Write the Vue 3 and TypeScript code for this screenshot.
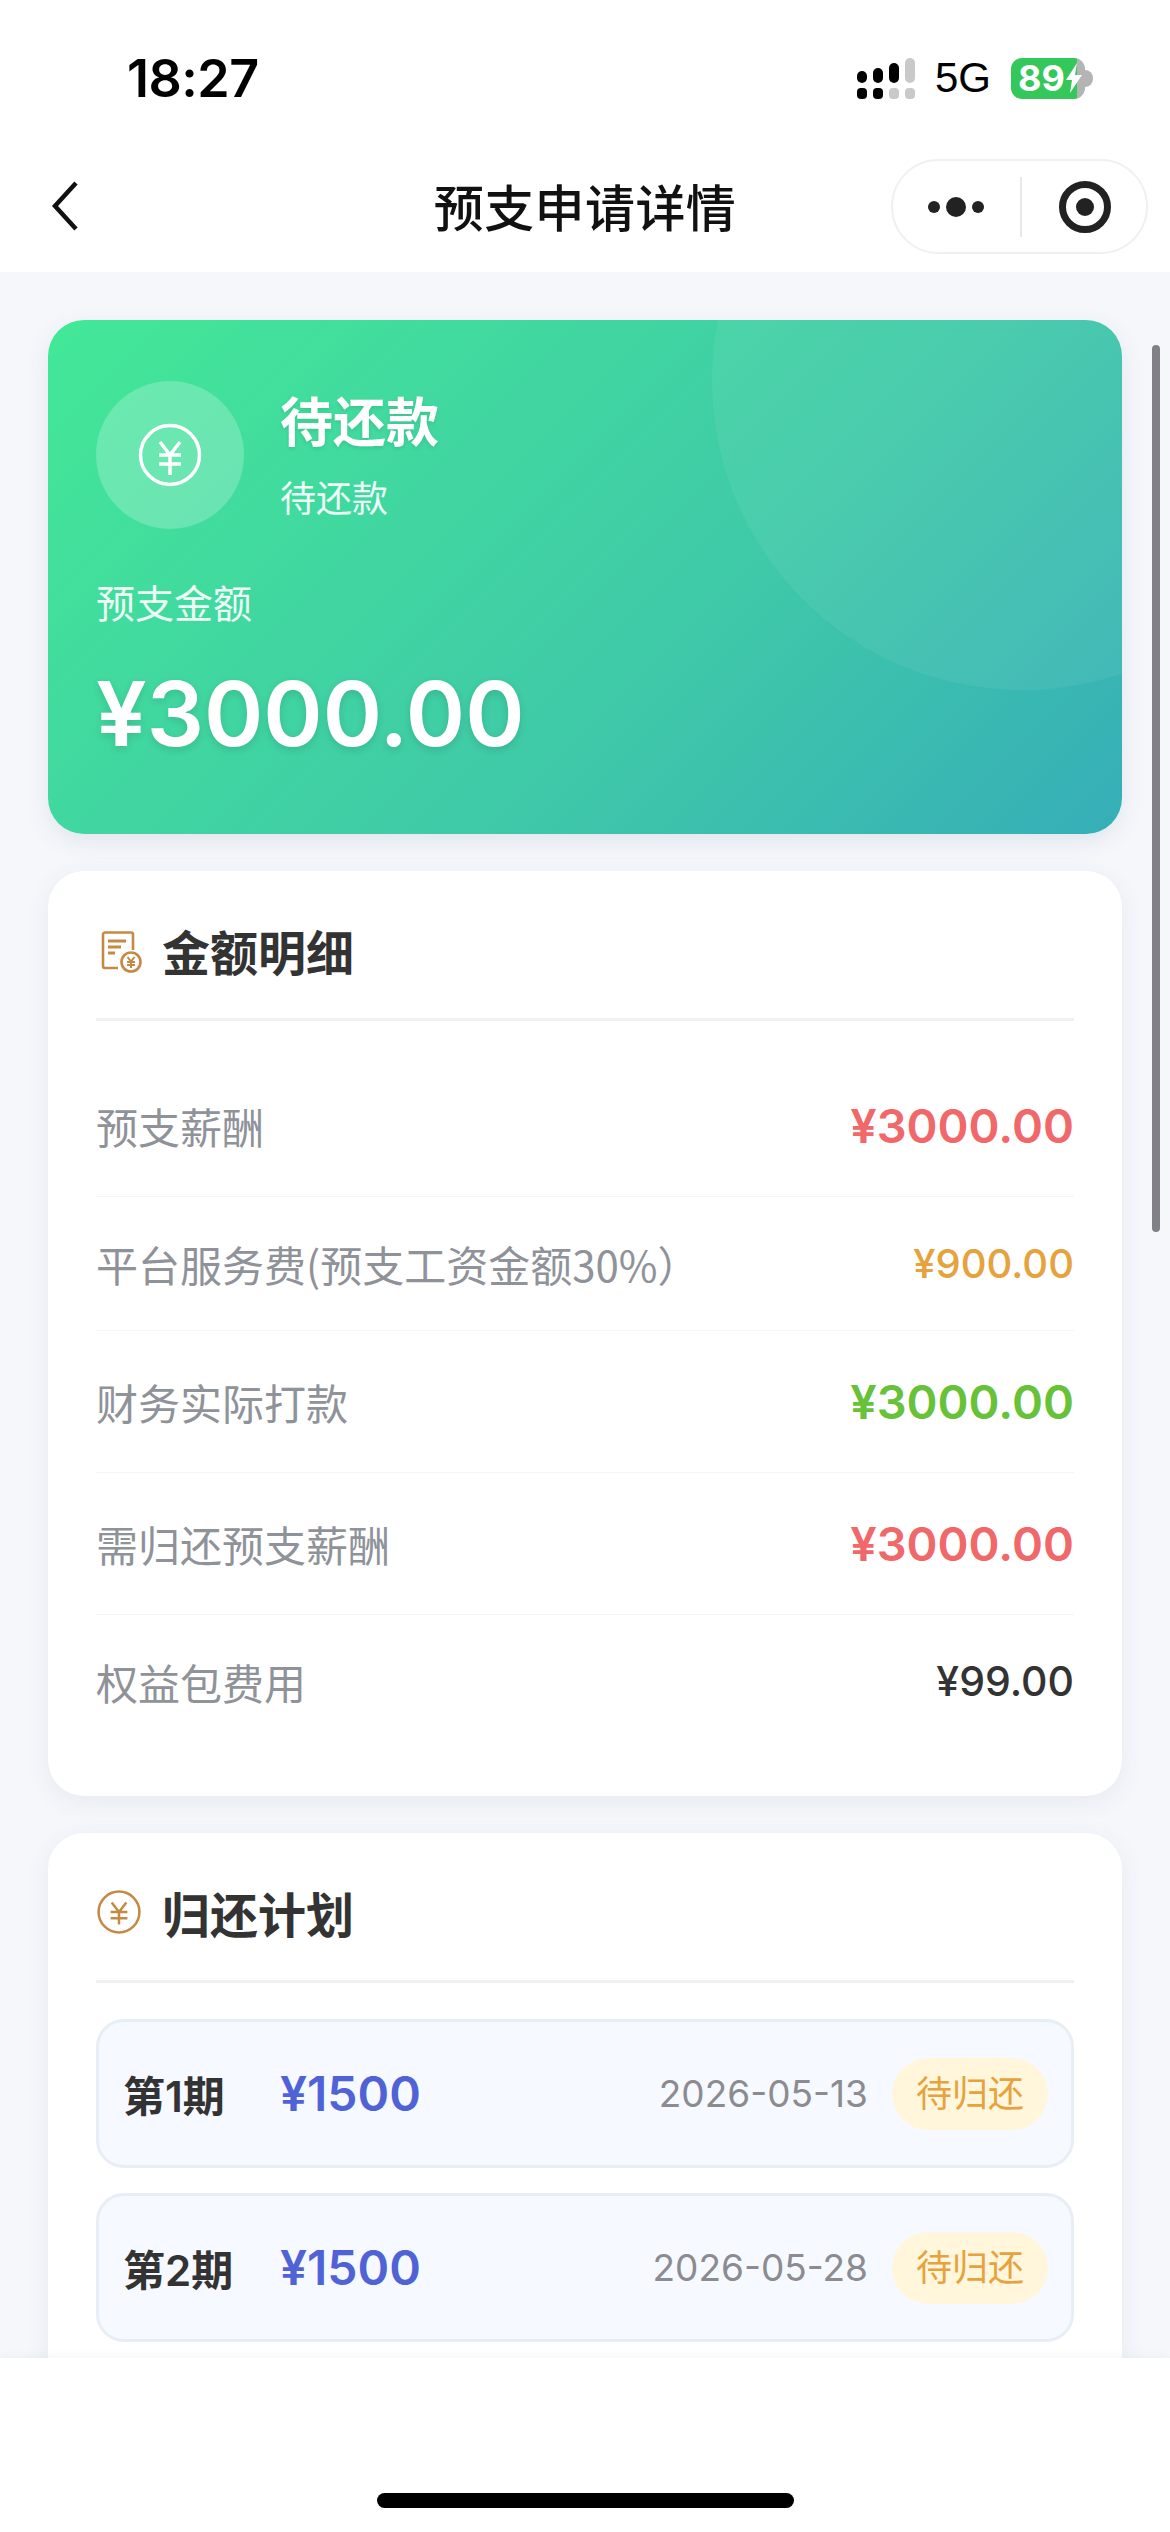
<script setup lang="ts">
// Advance request detail page: hero status card, amount breakdown and repayment plan.
interface AmountRow {
  label: string
  value: string
  tone: 'red' | 'amber' | 'green' | 'plain'
}

const rows: AmountRow[] = [
  { label: '预支薪酬', value: '¥3000.00', tone: 'red' },
  { label: '平台服务费(预支工资金额30%）', value: '¥900.00', tone: 'amber' },
  { label: '财务实际打款', value: '¥3000.00', tone: 'green' },
  { label: '需归还预支薪酬', value: '¥3000.00', tone: 'red' },
  { label: '权益包费用', value: '¥99.00', tone: 'plain' },
]

const plan = [
  { term: '第1期', amount: '¥1500', date: '2026-05-13', state: '待归还' },
  { term: '第2期', amount: '¥1500', date: '2026-05-28', state: '待归还' },
]
</script>

<template>
  <div class="screen">
    <header class="top">
      <div class="status">
        <span class="time">18:27</span>
        <div class="status-right">
          <svg class="signal" width="58" height="41" viewBox="0 0 58 41">
            <rect x="0" y="13" width="10" height="12" rx="5" fill="#000" />
            <rect x="16" y="10" width="10" height="15" rx="5" fill="#000" />
            <rect x="32" y="5" width="10" height="20" rx="5" fill="#000" />
            <rect x="48" y="0" width="10" height="25" rx="5" fill="#c9c9c9" />
            <rect x="0" y="30" width="10" height="11" rx="4" fill="#000" />
            <rect x="16" y="30" width="10" height="11" rx="4" fill="#000" />
            <rect x="32" y="30" width="10" height="11" rx="4" fill="#c9c9c9" />
            <rect x="48" y="30" width="10" height="11" rx="4" fill="#c9c9c9" />
          </svg>
          <span class="net">5G</span>
          <div class="battery">
            <span class="level">89</span>
            <svg class="bolt" width="18" height="30" viewBox="0 0 18 30">
              <path d="M12 0 1 17h6l-2 13L17 12h-7z" fill="#fff" />
            </svg>
            <i class="nub"></i>
          </div>
        </div>
      </div>
      <div class="nav">
        <svg class="back" width="30" height="52" viewBox="0 0 30 52">
          <path d="M26 3 5 26l21 23" fill="none" stroke="#111" stroke-width="4.5" />
        </svg>
        <h1>预支申请详情</h1>
        <div class="capsule">
          <svg width="70" height="24" viewBox="0 0 70 24">
            <circle cx="11" cy="12" r="6" fill="#222" />
            <circle cx="33" cy="12" r="10" fill="#222" />
            <circle cx="55" cy="12" r="6" fill="#222" />
          </svg>
          <i class="capsule-line"></i>
          <svg class="capsule-ring" width="54" height="54" viewBox="0 0 54 54">
            <circle cx="27" cy="27" r="22.5" fill="none" stroke="#222" stroke-width="7" />
            <circle cx="27" cy="27" r="9" fill="#222" />
          </svg>
        </div>
      </div>
    </header>

    <main class="content">
      <section class="hero">
        <i class="hero-arc"></i>
        <div class="hero-head">
          <div class="hero-icon">
            <svg width="64" height="64" viewBox="0 0 64 64" fill="none" stroke="#fff" stroke-width="3.5">
              <circle cx="32" cy="32" r="29.5" />
              <path d="M22 19l10 13 10-13M21 32h22M21 41h22M32 32v20" />
            </svg>
          </div>
          <div>
            <div class="hero-title">待还款</div>
            <div class="hero-sub">待还款</div>
          </div>
        </div>
        <div class="hero-label">预支金额</div>
        <div class="hero-amount">¥3000.00</div>
      </section>

      <section class="card detail">
        <div class="card-head">
          <svg class="detail-icon" width="42" height="42" viewBox="0 0 42 42" fill="none" stroke="#c48a45" stroke-width="2.6">
            <path d="M17 37H4a2 2 0 0 1-2-2V3.500a2 2 0 0 1 2-2h26a2 2 0 0 1 2 2V19" />
            <path d="M7 10h18M7 16h13M7 22h7" stroke-width="2.8" />
            <circle cx="30" cy="31" r="9.500" />
            <path d="M26.500 26l3.500 4.500 3.500-4.500M26 31h8M26 34h8M30 31v6" stroke-width="2" />
          </svg>
          <h2>金额明细</h2>
        </div>
        <div class="rows">
          <div v-for="row in rows" :key="row.label" class="row">
            <span class="row-label">{{ row.label }}</span>
            <span class="row-value" :class="row.tone">{{ row.value }}</span>
          </div>
        </div>
      </section>

      <section class="card plan">
        <div class="card-head">
          <svg class="plan-icon" width="44" height="44" viewBox="0 0 42 42" fill="none" stroke="#c48a45" stroke-width="2.4">
            <circle cx="21" cy="21" r="19.500" />
            <path d="M14 12l7 9 7-9M13 21h16M13 27h16M21 21v12" />
          </svg>
          <h2>归还计划</h2>
        </div>
        <div class="plan-list">
          <div v-for="item in plan" :key="item.term" class="plan-item">
            <span class="term">{{ item.term }}</span>
            <span class="amount">{{ item.amount }}</span>
            <span class="date">{{ item.date }}</span>
            <span class="badge">{{ item.state }}</span>
          </div>
        </div>
      </section>

      <i class="scrollbar"></i>
    </main>

    <footer class="bottom">
      <i class="home"></i>
    </footer>
  </div>
</template>

<style scoped>
.screen {
  display: flex;
  flex-direction: column;
  width: 1170px;
  height: 2532px;
  overflow: hidden;
  background: #f5f7fb;
  font-family: Inter, "Noto Sans CJK SC", sans-serif;
  color: #333;
}

.top {
  flex: none;
  height: 272px;
  background: #fff;
}

.status {
  display: flex;
  justify-content: space-between;
  align-items: center;
  height: 78px;
  padding: 39px 85px 0 127px;
}

.time {
  font-size: 52px;
  font-weight: 600;
  letter-spacing: -0.5px;
  color: #000;
}

.status-right {
  display: flex;
  align-items: center;
}

.net {
  margin: 0 20px;
  font-size: 42px;
  font-weight: 400;
  color: #000;
  font-family: "Liberation Sans", sans-serif;
}

.battery {
  position: relative;
  display: flex;
  align-items: center;
  justify-content: flex-start;
  width: 74px;
  height: 41px;
  padding-left: 7px;
  box-sizing: border-box;
  border-radius: 11px;
  background: linear-gradient(90deg, #34c759 0 66px, #b4b4b4 66px);
}

.level {
  font-size: 36px;
  font-weight: 700;
  line-height: 41px;
  color: #fff;
}

.nub {
  position: absolute;
  top: 12px;
  right: -8px;
  width: 8px;
  height: 17px;
  border-radius: 0 8px 8px 0;
  background: #b4b4b4;
}

.nav {
  position: relative;
  display: flex;
  align-items: center;
  justify-content: space-between;
  height: 134px;
  padding: 0 22px 0 50px;
  margin-top: 21px;
  box-sizing: border-box;
}

.nav h1 {
  position: absolute;
  left: 0;
  right: 0;
  margin: 0;
  text-align: center;
  font-size: 50px;
  letter-spacing: 0.4px;
  font-weight: 500;
  color: #111;
}

.back {
  margin-top: 2px;
}

.capsule {
  position: relative;
  display: flex;
  align-items: center;
  width: 257px;
  height: 95px;
  margin-top: 3px;
  padding-left: 30px;
  box-sizing: border-box;
  border: 2px solid #f0f0f0;
  border-radius: 48px;
}

.capsule-line {
  width: 2px;
  height: 60px;
  margin-left: 27px;
  background: #e8e8e8;
}

.capsule-ring {
  margin-left: 36px;
}

.content {
  position: relative;
  flex: 1;
  min-height: 0;
  overflow: hidden;
  padding: 48px;
}

.hero {
  position: relative;
  height: 514px;
  padding: 61px 48px 0;
  box-sizing: border-box;
  overflow: hidden;
  border-radius: 36px;
  background: linear-gradient(135deg, #43e897 0%, #3fc9a8 60%, #36aeb8 100%);
  box-shadow: 0 8px 24px rgba(60, 90, 120, 0.1);
  color: #fff;
}

.hero-arc {
  position: absolute;
  top: -250px;
  right: -210px;
  width: 620px;
  height: 620px;
  border-radius: 50%;
  background: rgba(255, 255, 255, 0.06);
}

.hero-head {
  position: relative;
  display: flex;
  align-items: flex-start;
  gap: 36px;
}

.hero-icon {
  display: flex;
  align-items: center;
  justify-content: center;
  width: 148px;
  height: 148px;
  border-radius: 50%;
  background: rgba(255, 255, 255, 0.22);
}

.hero-title {
  margin-top: 6px;
  font-size: 53px;
  font-weight: 700;
  line-height: 72px;
  text-shadow: 0 2px 4px rgba(0, 0, 0, 0.1);
}

.hero-sub {
  margin-top: 15px;
  font-size: 36px;
  line-height: 50px;
  opacity: 0.9;
}

.hero-label {
  position: relative;
  margin-top: 48px;
  font-size: 39px;
  line-height: 54px;
  opacity: 0.9;
}

.hero-amount {
  position: relative;
  margin-top: 27px;
  font-size: 90px;
  font-weight: 600;
  line-height: 112px;
  text-shadow: 0 3px 8px rgba(0, 0, 0, 0.12);
}

.card {
  margin-top: 37px;
  padding: 0 48px;
  border-radius: 36px;
  background: #fff;
  box-shadow: 0 6px 24px rgba(60, 80, 120, 0.08);
}

.detail {
  height: 925px;
  box-sizing: border-box;
}

.plan {
  padding-bottom: 48px;
}

.card-head {
  display: flex;
  align-items: center;
  gap: 19px;
  height: 150px;
  padding-top: 10px;
  box-sizing: border-box;
  border-bottom: 3px solid #f0f0f2;
}

.card-head h2 {
  margin: 0;
  font-size: 48px;
  font-weight: 700;
  color: #333;
}

.detail-icon {
  margin: 4px 0 0 5px;
}

.plan-icon {
  margin: 0 2px 0 1px;
}

.rows {
  padding-top: 34px;
}

.row {
  display: flex;
  align-items: center;
  justify-content: space-between;
  padding: 40px 0;
  border-bottom: 1px solid #f5f5f5;
}

.row:last-child {
  border-bottom: 0;
}

.row-label {
  font-family: "Noto Sans CJK SC", sans-serif;
  font-size: 42px;
  line-height: 53px;
  color: #8f9298;
}

.row-value {
  font-size: 41px;
  font-weight: 500;
  line-height: 53px;
}

.red,
.green {
  font-size: 47px;
  font-weight: 600;
  line-height: 61px;
}

.red {
  color: #f0686a;
}

.green {
  color: #67c23a;
}

.amber {
  font-size: 40px;
  color: #e6a23c;
}

.plain {
  color: #333;
}

.plan-list {
  display: flex;
  flex-direction: column;
  gap: 25px;
  padding-top: 36px;
}

.plan-item {
  display: flex;
  align-items: center;
  height: 149px;
  padding: 0 23px 0 24px;
  box-sizing: border-box;
  background: #f6f9ff;
  border: 3px solid #e8eef6;
  border-radius: 28px;
}

.term {
  width: 155px;
  font-size: 42px;
  font-weight: 600;
  color: #333;
}

.amount {
  margin-left: 2px;
  font-size: 48px;
  font-weight: 600;
  color: #4f63d6;
}

.date {
  margin-left: auto;
  font-size: 37px;
  color: #8c8c90;
}

.badge {
  margin-left: 24px;
  padding: 0 24px;
  height: 72px;
  line-height: 72px;
  border-radius: 36px;
  background: #fff6dc;
  font-size: 36px;
  color: #e6a23c;
}

.scrollbar {
  position: absolute;
  top: 73px;
  right: 10px;
  width: 8px;
  height: 887px;
  border-radius: 4px;
  background: #808086;
}

.bottom {
  position: relative;
  flex: none;
  height: 174px;
  background: #fff;
  box-shadow: 0 -2px 10px rgba(0, 0, 0, 0.04);
}

.home {
  position: absolute;
  left: 377px;
  bottom: 24px;
  width: 417px;
  height: 15px;
  border-radius: 8px;
  background: #000;
}
</style>
